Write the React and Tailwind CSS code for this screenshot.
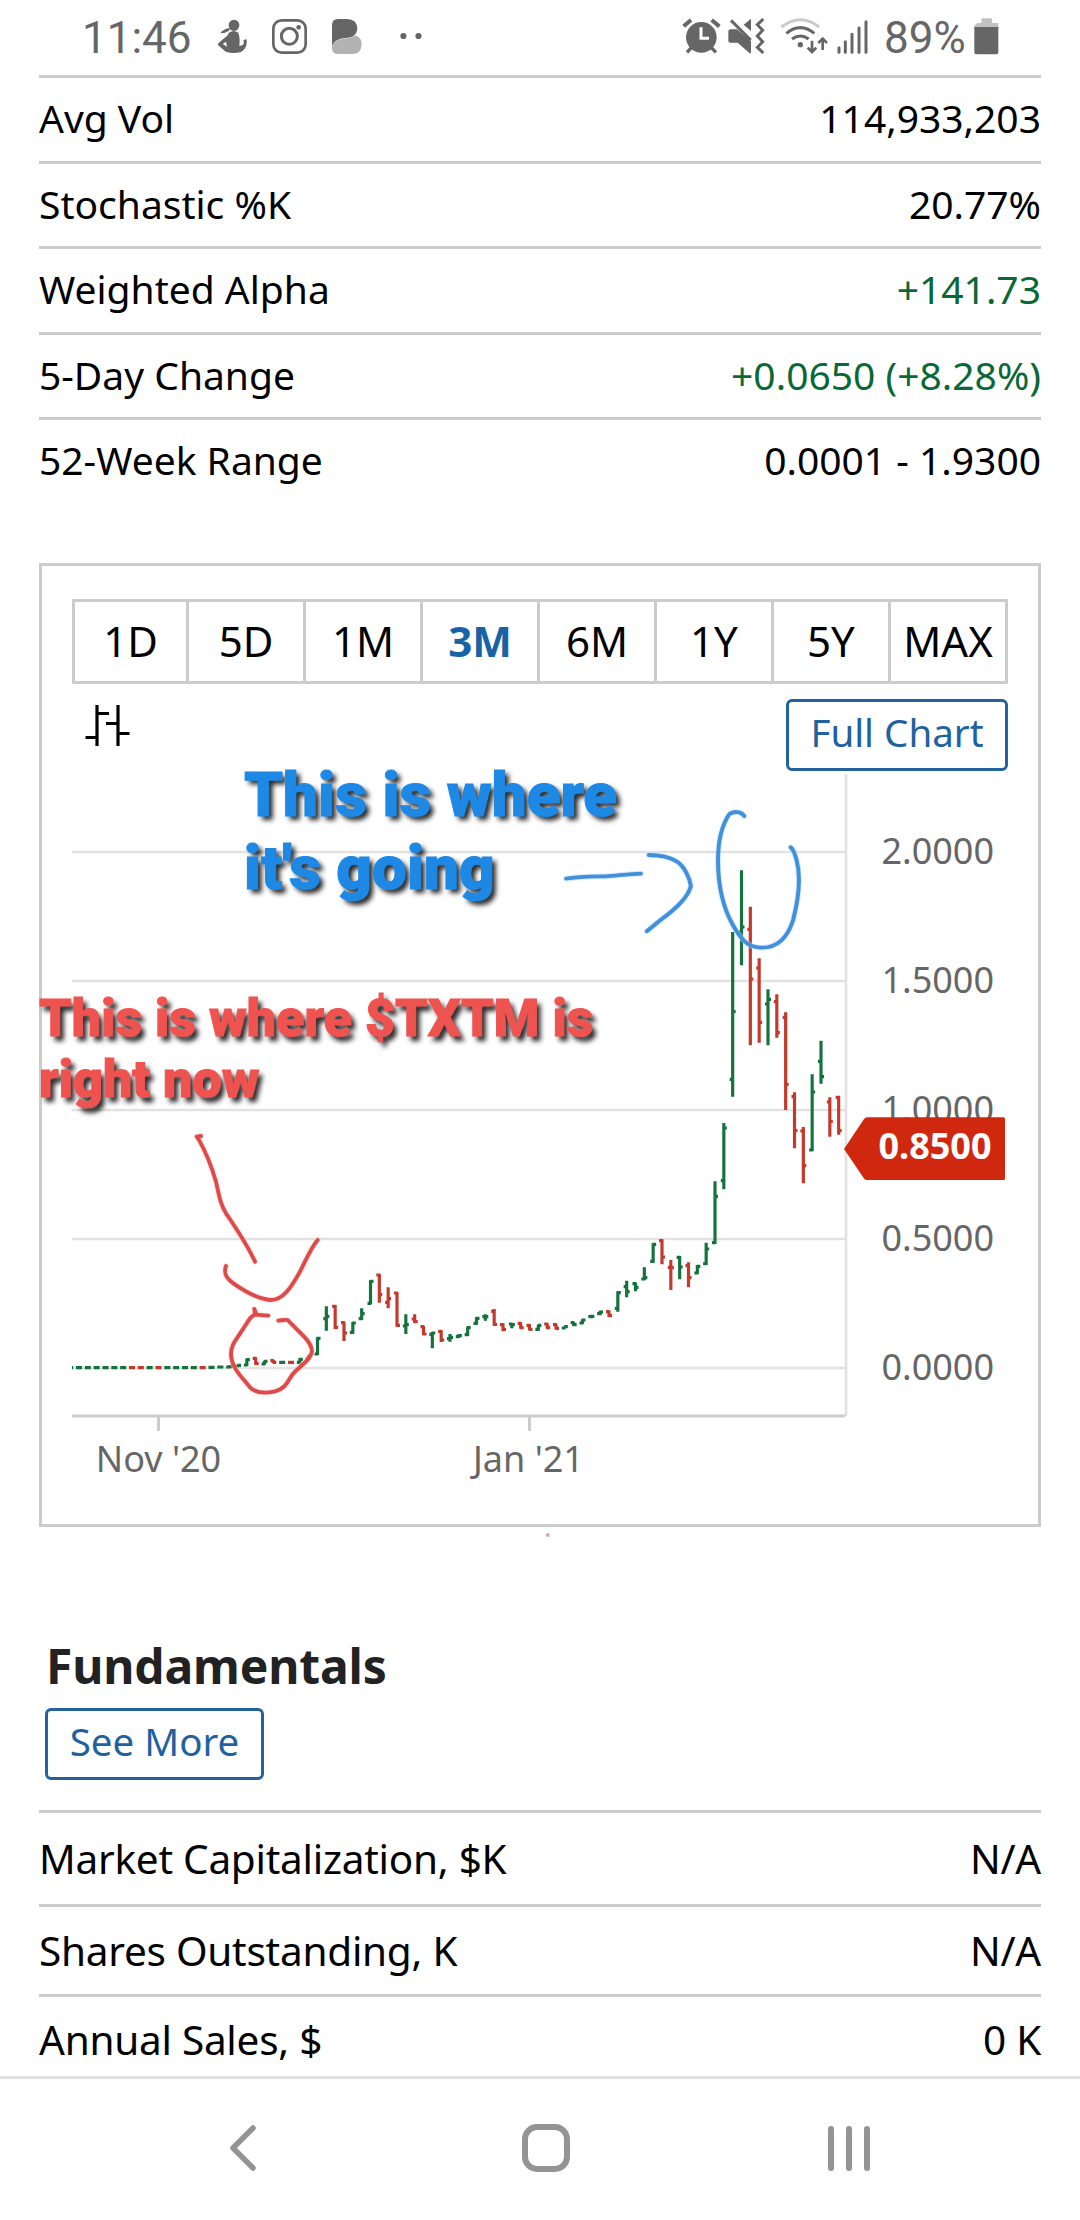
import React, { useState } from 'react';

const stats = [
  { label: 'Avg Vol', value: '114,933,203' },
  { label: 'Stochastic %K', value: '20.77%' },
  { label: 'Weighted Alpha', value: '+141.73', up: true },
  { label: '5-Day Change', value: '+0.0650 (+8.28%)', up: true },
  { label: '52-Week Range', value: '0.0001 - 1.9300' },
];

const fundamentals = [
  { label: 'Market Capitalization, $K', value: 'N/A', height: 'h-[94px]' },
  { label: 'Shares Outstanding, K', value: 'N/A', height: 'h-[90px]' },
  { label: 'Annual Sales, $', value: '0 K', height: 'h-[88px]' },
];

const ranges = ['1D', '5D', '1M', '3M', '6M', '1Y', '5Y', 'MAX'];

const yTicks = [
  { label: '2.0000', y: 852 },
  { label: '1.5000', y: 981 },
  { label: '1.0000', y: 1110 },
  { label: '0.5000', y: 1239 },
  { label: '0.0000', y: 1368 },
];

const xTicks = [
  { label: "Nov '20", x: 158.5, textX: 158.5 },
  { label: "Jan '21", x: 529.5, textX: 528.5 },
];

const UP = '#14723f';
const DOWN = '#c4392b';
const BAR_STEP = 26.5;

// [direction, high, low, open, close], newest first, in thirds of a pixel
const bars = [
  ['d', 497, 614, 502, 602],
  ['d', 502, 620, 516, 574],
  ['u', 332, 461, 394, 440],
  ['u', 433, 663, 660, 486],
  ['d', 591, 760, 603, 707],
  ['d', 487, 655, 500, 602],
  ['d', 247, 540, 262, 463],
  ['d', 193, 323, 215, 308],
  ['u', 178, 346, 222, 208],
  ['d', 85, 338, 114, 277],
  ['d', -70, 346, -2, 147],
  ['u', -179, 106, 6, -9],
  ['u', 6, 500, 448, 245],
  ['u', 579, 778, 752, 594],
  ['u', 754, 942, 938, 799],
  ['u', 938, 1005, 1001, 957],
  ['u', 1005, 1033, 1029, 1009],
  ['d', 997, 1072, 1007, 1043],
  ['u', 978, 1048, 982, 1011],
  ['d', 990, 1080, 1012, 1013],
  ['d', 928, 1003, 932, 981],
  ['u', 940, 998, 994, 943],
  ['u', 1012, 1051, 1047, 1043],
  ['u', 1058, 1084, 1061, 1072],
  ['u', 1052, 1102, 1070, 1085],
  ['u', 1084, 1145, 1135, 1088],
  ['d', 1142, 1161, 1145, 1157],
  ['u', 1142, 1156, 1151, 1146],
  ['u', 1154, 1165, 1160, 1159],
  ['u', 1168, 1182, 1179, 1170],
  ['u', 1176, 1188, 1178, 1184],
  ['u', 1190, 1194, 1194, 1190],
  ['d', 1181, 1198, 1184, 1195],
  ['d', 1179, 1196, 1182, 1193],
  ['u', 1184, 1202, 1198, 1186],
  ['d', 1183, 1201, 1186, 1198],
  ['d', 1177, 1196, 1180, 1193],
  ['u', 1179, 1195, 1182, 1184],
  ['d', 1180, 1204, 1184, 1198],
  ['d', 1137, 1187, 1144, 1183],
  ['u', 1153, 1172, 1160, 1160],
  ['u', 1162, 1184, 1180, 1165],
  ['u', 1190, 1218, 1214, 1193],
  ['u', 1213, 1223, 1220, 1217],
  ['u', 1212, 1235, 1226, 1222],
  ['d', 1201, 1236, 1204, 1230],
  ['u', 1206, 1255, 1213, 1209],
  ['d', 1187, 1216, 1190, 1212],
  ['d', 1153, 1180, 1167, 1175],
  ['u', 1153, 1212, 1188, 1184],
  ['d', 1086, 1190, 1089, 1186],
  ['d', 1072, 1135, 1117, 1106],
  ['d', 1032, 1118, 1035, 1094],
  ['u', 1051, 1123, 1120, 1054],
  ['u', 1135, 1170, 1166, 1151],
  ['u', 1176, 1211, 1207, 1179],
  ['d', 1175, 1233, 1178, 1209],
  ['d', 1125, 1197, 1129, 1192],
  ['u', 1129, 1202, 1166, 1159],
  ['u', 1222, 1275, 1272, 1225],
  ['d', 1275, 1288, 1285, 1278],
  ['u', 1285, 1300, 1297, 1288],
  ['d', 1296, 1299, 1297, 1297],
  ['u', 1296, 1299, 1297, 1297],
  ['d', 1290, 1299, 1292, 1297],
  ['u', 1292, 1304, 1302, 1294],
  ['d', 1282, 1304, 1285, 1301],
  ['u', 1286, 1308, 1305, 1289],
  ['u', 1306, 1308, 1308, 1306],
  ['u', 1310, 1311, 1311, 1310],
  ['u', 1311, 1312, 1311, 1311],
  ['u', 1312, 1313, 1312, 1312],
  ['d', 1313, 1313, 1313, 1313],
  ['u', 1313, 1313, 1313, 1313],
  ['u', 1313, 1313, 1313, 1313],
  ['u', 1313, 1313, 1313, 1313],
  ['u', 1313, 1313, 1313, 1313],
  ['d', 1313, 1313, 1313, 1313],
  ['u', 1313, 1313, 1313, 1313],
  ['d', 1313, 1313, 1313, 1313],
  ['d', 1313, 1313, 1313, 1313],
  ['u', 1313, 1313, 1313, 1313],
  ['u', 1313, 1313, 1313, 1313],
  ['u', 1313, 1313, 1313, 1313],
  ['u', 1313, 1313, 1313, 1313],
  ['u', 1313, 1313, 1313, 1313],
  ['u', 1313, 1313, 1313, 1313],
  ['u', 1313, 1313, 1313, 1313],
];

const blueStrokes = [
  'M76 986C110 980 150 980 190 979C230 976 260 972 293 971',
  'M316 915C350 915 375 920 398 935C420 950 435 985 438 1008C430 1045 390 1080 350 1110L310 1144',
  'M593 798C585 785 565 782 550 792C525 830 516 880 517 940C518 1010 530 1070 560 1125C590 1180 610 1192 640 1193C690 1195 720 1160 735 1110C750 1050 758 980 745 930C740 910 735 897 728 892',
];

const redStrokes = [
  'M543 78L530 80L536 88C560 130 575 170 588 215C598 260 602 285 618 310C645 350 680 400 705 455',
  'M618 468C610 490 618 505 640 520C680 548 720 568 752 570C790 570 815 530 840 485C860 445 875 410 893 390',
  'M745 617L705 614L703 597L708 610L690 625C650 690 632 700 633 735C635 775 665 800 690 832C710 852 740 850 765 844C802 834 802 810 822 788C850 760 875 745 876 722C872 690 835 665 803 630C795 628 785 631 775 632',
];

function StatusBar() {
  return (
    <header className="flex h-[75px] items-start font-[Roboto,sans-serif] text-[44px] leading-[52px] text-[#666666]">
      <span className="ml-[82px] mt-[12px] w-[133px] whitespace-nowrap">11:46</span>

      {/* seated figure */}
      <svg className="ml-[2px] mt-[19px]" width="31" height="35" viewBox="472 57 93 105" fill="#666666">
        <ellipse cx="523" cy="76" rx="16" ry="17" />
        <path d="M482 100 Q490 86 512 84 L508 92 Q496 100 482 100Z" />
        <path
          fillRule="evenodd"
          d="M508 98 Q522 88 536 98 Q542 112 539 137 Q550 138 553 128 Q547 118 561 118 Q564 145 544 156 Q520 163 498 155 L474 134 Q474 130 502 108Z M489 132 L499 125 L502 140Z"
        />
      </svg>
      <svg className="ml-[24px] mt-[19px]" width="35" height="35" viewBox="636 57 105 105" fill="none" stroke="#666666">
        <rect x="640" y="61" width="97" height="97" rx="25" strokeWidth="8" />
        <circle cx="688" cy="109" r="24" strokeWidth="9" />
        <circle cx="716" cy="82" r="7" fill="#666666" stroke="none" />
      </svg>
      <svg className="ml-[25px] mt-[19px]" width="30" height="35" viewBox="817 57 90 105">
        <path fill="#666666" d="M817 75Q817 57 835 57H862Q893 57 893 88Q890 114 858 114Q825 116 817 138Z" />
        <path fill="#b3b3b3" d="M817 138Q824 118 852 116Q878 115 888 106Q906 113 906 134Q904 162 878 162H836Q817 162 817 144Z" />
      </svg>
      <svg className="ml-[38px] mt-[32px]" width="22" height="8" viewBox="0 0 22 8" fill="#666666">
        <circle cx="3.4" cy="4" r="3.1" />
        <circle cx="18.5" cy="4" r="3.1" />
      </svg>

      {/* alarm */}
      <svg className="ml-[260px] mt-[18px]" width="39" height="36" viewBox="65 54 117 108" stroke="#666666">
        <circle cx="123" cy="112" r="46" fill="#666666" stroke="none" />
        <path d="M70 79L92 60M154 60L177 79" strokeWidth="12" />
        <path d="M92 144L80 157M154 144L167 157" strokeWidth="10" />
        <path d="M122 82V115H146" fill="none" stroke="#ffffff" strokeWidth="9" />
      </svg>
      {/* muted speaker with vibrate */}
      <svg className="ml-[7px] mt-[18px]" width="37" height="36" viewBox="203 54 111 108" fill="#666666">
        <path d="M204 94Q204 88 210 88H230L272 124V160H268L232 128H210Q204 128 204 122Z" />
        <path d="M272 56V93L250 74Z" />
        <path d="M212 61L271 120" stroke="#666666" strokeWidth="9" />
        <path d="M309 57L291 74L307 91L291 108L307 125L291 142L309 159" fill="none" stroke="#666666" strokeWidth="9" />
      </svg>
      {/* wifi with traffic arrows */}
      <svg className="ml-[15px] mt-[17px]" width="48" height="37" viewBox="357 51 144 111" fill="none" stroke="#666666" strokeWidth="9">
        <path d="M361 81Q418 38 475 81" stroke="#cacaca" />
        <path d="M376 100Q418 66 460 100" />
        <path d="M393 117Q418 99 443 117" />
        <circle cx="418" cy="134" r="8" fill="#666666" stroke="none" />
        <path d="M453 122V155M440 143L453 156L466 143M485 150V117M472 129L485 116L498 129" strokeWidth="8" />
      </svg>
      <svg className="ml-[9px] mt-[19px]" width="32" height="35" viewBox="530 57 96 105" stroke="#666666" strokeWidth="9" strokeLinecap="round">
        <path d="M536 143V157M555 125V157M575 103V157M596 84V157M617 65V157" />
      </svg>
      <span className="ml-[15px] mt-[12px] w-[87px] whitespace-nowrap">89%</span>
      <svg className="ml-[3px] mt-[17px]" width="25" height="38" viewBox="944 50 75 114">
        <path fill="#c2c2c2" d="M966 57Q966 54 969 54H995Q998 54 998 57V68H1017V84H945V76L955 68H966Z" />
        <path fill="#666666" d="M945 80H1017V156Q1017 162 1011 162H951Q945 162 945 156Z" />
      </svg>
    </header>
  );
}

function OutlineButton({ children, className = '' }) {
  return (
    <button
      className={`flex h-[72px] items-center justify-center rounded-[6px] border-[3px] border-[#23629a] pb-[5px] text-[38.5px] leading-none text-[#1f629f] ${className}`}
    >
      {children}
    </button>
  );
}

function OhlcBars() {
  return (
    <g clipPath="url(#plot)">
      <g transform="translate(560 930) scale(0.33333)" strokeWidth="9.5">
        {bars.map(([dir, high, low, open, close], i) => {
          const x = 836 - i * BAR_STEP;
          return (
            <path
              key={i}
              stroke={dir === 'u' ? UP : DOWN}
              d={`M${x} ${high}V${low}M${x - 9} ${open}H${x + 2}M${x - 2} ${close}H${x + 9}`}
            />
          );
        })}
      </g>
    </g>
  );
}

function PriceChart() {
  return (
    <svg className="block" width="996" height="753" viewBox="42 771 996 753">
      <clipPath id="plot">
        <rect x="72" y="774" width="774" height="642" />
      </clipPath>
      {yTicks.map((tick) => (
        <line key={tick.label} x1="72" x2="845" y1={tick.y} y2={tick.y} stroke="#e2e2e2" strokeWidth="2.6" />
      ))}
      <line x1="846" x2="846" y1="774" y2="1416" stroke="#e2e2e2" strokeWidth="2.6" />
      <line x1="72" x2="845" y1="1416" y2="1416" stroke="#cccccc" strokeWidth="3" />
      {xTicks.map((tick) => (
        <line key={tick.label} x1={tick.x} x2={tick.x} y1="1416" y2="1431" stroke="#cccccc" strokeWidth="3" />
      ))}
      <OhlcBars />
      <g fill="#666666" fontSize="36">
        {yTicks.map((tick) => (
          <text key={tick.label} x="994" y={tick.y + 11.5} textAnchor="end">
            {tick.label}
          </text>
        ))}
        {xTicks.map((tick) => (
          <text key={tick.label} x={tick.textX} y="1472" textAnchor="middle">
            {tick.label}
          </text>
        ))}
      </g>
      <path d="M844 1149L864 1119Q865.500 1117.300 867 1117.300H1003.500Q1005 1117.300 1005 1119V1178.500Q1005 1180 1003.500 1180H867Q865.500 1180 864 1178.500Z" fill="#d0280f" />
      <text x="991.500" y="1158.500" textAnchor="end" fontSize="36" fontWeight="700" fill="#ffffff">
        0.8500
      </text>
    </svg>
  );
}

function Marker({ strokes, color, glow, transform }) {
  return (
    <g transform={transform}>
      {strokes.map((d) => (
        <path key={`${d}-glow`} d={d} stroke={glow} strokeWidth="17" opacity="0.55" />
      ))}
      {strokes.map((d) => (
        <path key={d} d={d} stroke={color} strokeWidth="11.5" />
      ))}
    </g>
  );
}

// hand-drawn marks over the chart
function Annotations() {
  return (
    <>
      <svg className="absolute inset-0" width="1080" height="2076" viewBox="0 0 1080 2076" fill="none" strokeLinecap="round" strokeLinejoin="round">
        <Marker strokes={blueStrokes} color="#4290dc" glow="#b5dcff" transform="translate(540 550) scale(0.34437 0.33333)" />
        <Marker strokes={redStrokes} color="#dd4a4a" glow="#ffc4c4" transform="translate(20 1110) scale(0.33333)" />
        <circle cx="547.700" cy="1535" r="2" fill="#dcaaaa" />
      </svg>
      <p className="absolute left-[244px] top-[758px] whitespace-nowrap font-[Roboto,sans-serif] text-[62px] font-black leading-[73px] text-[#1e88e5] [-webkit-text-stroke:1px_#1e88e5] [text-shadow:4px_4px_5px_rgba(0,0,0,0.85)]">
        This is where
        <br />
        it's going
      </p>
      <p className="absolute left-[39px] top-[988px] whitespace-nowrap font-[Roboto,sans-serif] text-[52px] font-black leading-[61px] text-[#ef5350] [-webkit-text-stroke:1px_#ef5350] [text-shadow:4px_5px_5px_rgba(0,0,0,0.85)]">
        This is where $TXTM is
        <br />
        right now
      </p>
    </>
  );
}

function NavBar() {
  return (
    <nav className="h-[144px] border-t-[3px] border-[#e1e1e1]">
      <div className="ml-[229px] mt-[44px] flex h-[50px] items-center">
        <svg width="28" height="46" viewBox="0 0 28 46" fill="none" stroke="#949494" strokeWidth="5.500" strokeLinecap="round" strokeLinejoin="round">
          <path d="M24 3L4 23L24 43" />
        </svg>
        <div className="ml-[265px] h-[48px] w-[48px] rounded-[15px] border-[6px] border-[#949494]" />
        <div className="ml-[258px] flex gap-[12px]">
          <span className="h-[45px] w-[6px] rounded-full bg-[#949494]" />
          <span className="h-[45px] w-[6px] rounded-full bg-[#949494]" />
          <span className="h-[45px] w-[6px] rounded-full bg-[#949494]" />
        </div>
      </div>
    </nav>
  );
}

function App() {
  const [activeRange, setActiveRange] = useState('3M');

  return (
    <div className="relative h-[2220px] w-[1080px] overflow-hidden bg-white font-['Noto_Sans',sans-serif] text-black">
      <div className="h-[2076px] overflow-hidden">
        <StatusBar />

        <main className="mx-[39px]">
          <section className="h-[488px]">
            {stats.map((row) => (
              <div
                key={row.label}
                className="flex h-[85.5px] items-center justify-between border-t-[3px] border-[#cccccc] pb-[3px] text-[39px] leading-none"
              >
                <span>{row.label}</span>
                <span className={row.up ? 'text-[#0a6836]' : ''}>{row.value}</span>
              </div>
            ))}
          </section>

          <section className="h-[964px] border-[3px] border-[#cccccc] pt-[33px]">
            <div className="ml-[30px] flex h-[85px] w-[936px] border-[3px] border-r-0 border-[#cccccc]">
              {ranges.map((range, i) => (
                <button
                  key={range}
                  onClick={() => setActiveRange(range)}
                  className={`border-r-[3px] border-[#cccccc] pb-[1px] text-[42px] leading-none ${
                    i === 0 ? 'w-[114px]' : 'w-[117px]'
                  } ${range === activeRange ? 'font-bold text-[#1763a6]' : ''}`}
                >
                  {range}
                </button>
              ))}
            </div>

            <div className="ml-[30px] mt-[15px] flex h-[72px] w-[936px] items-start justify-between">
              <svg className="ml-[13px] mt-[6px]" width="45" height="41" viewBox="85 705 45 41" stroke="#000000" strokeWidth="3.200">
                <path d="M97 705V746M118 705V746M97 713.500H109M106 723.500H118M85.500 737.500H97M118 733.500H129.500" />
              </svg>
              <OutlineButton className="w-[222px]">Full Chart</OutlineButton>
            </div>

            <PriceChart />
          </section>

          <section className="pt-[103px]">
            <h2 className="ml-[7px] h-[78px] text-[48px] font-bold leading-[71px] tracking-[-0.15px] text-[#222222]">
              Fundamentals
            </h2>
            <OutlineButton className="ml-[6px] w-[219px]">See More</OutlineButton>
            <div className="mt-[30px]">
              {fundamentals.map((row) => (
                <div
                  key={row.label}
                  className={`flex items-center justify-between border-t-[3px] border-[#cccccc] pt-[2px] text-[40.5px] leading-none tracking-[-0.25px] ${row.height}`}
                >
                  <span>{row.label}</span>
                  <span>{row.value}</span>
                </div>
              ))}
            </div>
          </section>
        </main>
      </div>

      <NavBar />
      <Annotations />
    </div>
  );
}

export default App;
